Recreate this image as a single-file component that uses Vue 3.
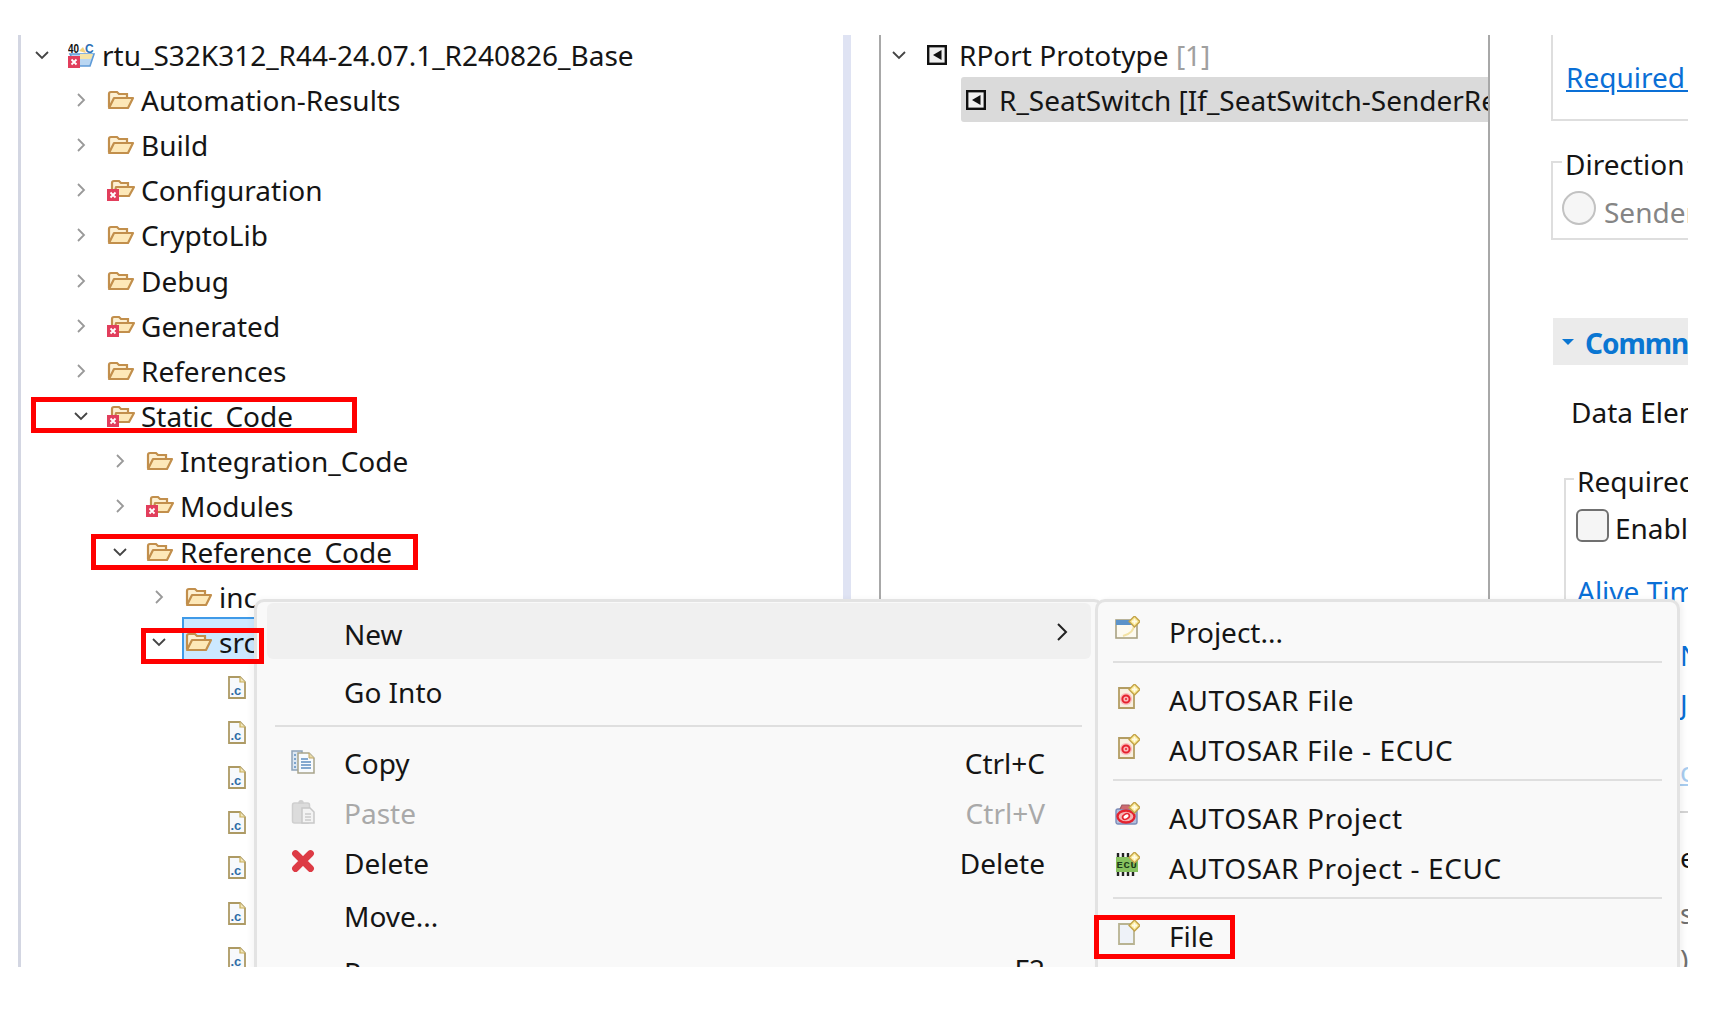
<script setup>
const rows = [
  { label: 'rtu_S32K312_R44-24.07.1_R240826_Base', level: 0, open: true, icon: 'root' },
  { label: 'Automation-Results', level: 1, icon: 'folder' },
  { label: 'Build', level: 1, icon: 'folder' },
  { label: 'Configuration', level: 1, icon: 'folderErr' },
  { label: 'CryptoLib', level: 1, icon: 'folder' },
  { label: 'Debug', level: 1, icon: 'folder' },
  { label: 'Generated', level: 1, icon: 'folderErr' },
  { label: 'References', level: 1, icon: 'folder' },
  { label: 'Static_Code', level: 1, open: true, icon: 'folderErr' },
  { label: 'Integration_Code', level: 2, icon: 'folder' },
  { label: 'Modules', level: 2, icon: 'folderErr' },
  { label: 'Reference_Code', level: 2, open: true, icon: 'folder' },
  { label: 'inc', level: 3, icon: 'folder' },
  { label: 'src', level: 3, open: true, icon: 'folder', selected: true },
  { label: 'a.c', level: 4, icon: 'cfile', leaf: true },
  { label: 'b.c', level: 4, icon: 'cfile', leaf: true },
  { label: 'c.c', level: 4, icon: 'cfile', leaf: true },
  { label: 'd.c', level: 4, icon: 'cfile', leaf: true },
  { label: 'e.c', level: 4, icon: 'cfile', leaf: true },
  { label: 'f.c', level: 4, icon: 'cfile', leaf: true },
  { label: 'g.c', level: 4, icon: 'cfile', leaf: true }
]
const indent = (level) => ({ paddingLeft: `${11 + level * 39}px` })

const mainItems = [
  { label: 'Go Into', cls: 'goInto' },
  { sep: true },
  { label: 'Copy', icon: 'copy', key: 'Ctrl+C' },
  { label: 'Paste', icon: 'paste', key: 'Ctrl+V', disabled: true },
  { label: 'Delete', icon: 'del', key: 'Delete' },
  { label: 'Move...', cls: 'tall' },
  { label: 'Rename...', key: 'F2', cls: 'tall' }
]
const subItems = [
  { label: 'Project...', icon: 'newproj' },
  { sep: true },
  { label: 'AUTOSAR File', icon: 'arfile', wide: true },
  { label: 'AUTOSAR File - ECUC', icon: 'arfile', wide: true },
  { sep: true },
  { label: 'AUTOSAR Project', icon: 'arproj', wide: true },
  { label: 'AUTOSAR Project - ECUC', icon: 'ecu', wide: true },
  { sep: true },
  { label: 'File', icon: 'newfile' }
]
const iconSize = {
  root: [28, 26], folder: [28, 20], folderErr: [28, 22], cfile: [18, 23],
  copy: [24, 25], paste: [24, 25], del: [24, 24],
  newproj: [25, 23], arfile: [25, 25], arproj: [25, 24], ecu: [25, 24], newfile: [25, 25]
}
</script>

<template>
  <div class="page">
    <svg class="defs" width="0" height="0" aria-hidden="true">
      <defs>
        <symbol id="spark" viewBox="0 0 10 10" overflow="visible">
          <path d="M5 0 L10 5 L5 10 L0 5 Z" fill="#f8e58a" stroke="#c2a24a" stroke-width="1.2"/>
          <path d="M5 2.6 V7.4 M2.6 5 H7.4" stroke="#fffbe6" stroke-width="1.6"/>
        </symbol>
        <symbol id="folder" viewBox="0 0 28 20">
          <path d="M2 17 V4 Q2 2 4 2 H10 L12 4 H20 V8" fill="#fdf0d2" stroke="#c28f4c" stroke-width="2.2"/>
          <path d="M2 18 L7 8 H26 L21 18 Z" fill="#fde8b8" stroke="#c28f4c" stroke-width="2.2" stroke-linejoin="round"/>
        </symbol>
        <symbol id="folderErr" viewBox="0 0 28 22">
          <path d="M5 15 V4 Q5 2 7 2 H12 L14 4 H21 V8" fill="#fdf0d2" stroke="#c28f4c" stroke-width="2.2"/>
          <path d="M7 17 L9 8 H27 L22 17 Z" fill="#fde8b8" stroke="#c28f4c" stroke-width="2.2" stroke-linejoin="round"/>
          <rect x="0" y="10" width="12" height="12" fill="#e23e5c"/>
          <path d="M3.5 13.5 L8.5 18.5 M8.5 13.5 L3.5 18.5" stroke="#fff" stroke-width="1.8"/>
        </symbol>
        <symbol id="root" viewBox="0 0 28 26">
          <text x="0" y="11" font-family="Liberation Sans Narrow, Liberation Sans, sans-serif" font-size="12" font-weight="700" fill="#111" textLength="11" lengthAdjust="spacingAndGlyphs">40</text>
          <text x="17" y="11" font-family="Liberation Sans, sans-serif" font-size="12" font-weight="700" fill="#2c6fb5">C</text>
          <path d="M11 9 L15 5 L18 11 Z" fill="#f2d27c"/>
          <path d="M2 12 H26 L22 24 H8 Z" fill="#b9d6f2" stroke="#5f9bd8" stroke-width="1.6"/>
          <path d="M12 12 H25 L23 17 H12 Z" fill="#f5e4a8"/>
          <rect x="0" y="14" width="12" height="12" fill="#e23e5c"/>
          <path d="M3.5 17.5 L8.5 22.5 M8.5 17.5 L3.5 22.5" stroke="#fff" stroke-width="1.8"/>
        </symbol>
        <symbol id="cfile" viewBox="0 0 18 23">
          <path d="M1 1 H12 L17 6 V22 H1 Z" fill="#f7f9fc" stroke="#ad9a64" stroke-width="1.8"/>
          <path d="M12 1 V6 H17" fill="#f1e6bb" stroke="#c9ae58" stroke-width="1.2"/>
          <text x="2.5" y="18.5" font-family="Liberation Sans, sans-serif" font-size="13" font-weight="700" fill="#2f6da6">.c</text>
        </symbol>
        <symbol id="port" viewBox="0 0 20 20">
          <rect x="1.2" y="1.2" width="17.6" height="17.6" fill="#f0f0f0" stroke="#111" stroke-width="2.4"/>
          <path d="M14.5 5 V15 L6 10 Z" fill="#111"/>
        </symbol>
        <symbol id="copy" viewBox="0 0 24 25">
          <path d="M1 2 H11 V21 H1 Z" fill="#dbe6f2" stroke="#8fa3b8" stroke-width="1.5"/>
          <path d="M7 4 H18 L23 9 V24 H7 Z" fill="#f8fbfe" stroke="#a8a48a" stroke-width="1.5"/>
          <path d="M18 4 V9 H23" fill="#e8d9a8" stroke="#c2a866" stroke-width="1"/>
          <path d="M10 10 H17 M10 13 H20 M10 16 H20 M10 19 H20 M3 6 H5 M3 10 H5 M3 14 H5 M3 18 H5" stroke="#5f8fc0" stroke-width="1.5"/>
        </symbol>
        <symbol id="paste" viewBox="0 0 24 25">
          <rect x="1.5" y="4" width="17" height="20" rx="2" fill="#dcdcdc" stroke="#cfcfcf" stroke-width="1.5"/>
          <path d="M7 5 Q7 1 10 1 Q13 1 13 5 Z" fill="#d0d0d0"/>
          <path d="M11 9 H19 L23 13 V24 H11 Z" fill="#f3f3f3" stroke="#c8c8c8" stroke-width="1.5"/>
          <path d="M14 15 H20 M14 18 H20 M14 21 H20" stroke="#cccccc" stroke-width="1.4"/>
        </symbol>
        <symbol id="del" viewBox="0 0 24 24">
          <path d="M4.5 4.5 L19.5 19.5 M19.5 4.5 L4.5 19.5" stroke="#dd3b45" stroke-width="6.8" stroke-linecap="round"/>
        </symbol>
        <symbol id="newproj" viewBox="0 0 25 23">
          <rect x="1" y="4" width="21" height="18" fill="#fdfaf0" stroke="#a9a283" stroke-width="1.6"/>
          <rect x="1" y="4" width="21" height="5" fill="#5c93c9"/>
          <path d="M19 9 Q19 17 8 20" fill="none" stroke="#f3e2a4" stroke-width="2"/>
          <use href="#spark" x="14" y="0" width="11" height="11"/>
        </symbol>
        <symbol id="arfile" viewBox="0 0 25 25">
          <path d="M4 4 H19 V24 H4 Z" fill="#f8efe0" stroke="#b39d63" stroke-width="1.8"/>
          <circle cx="11" cy="15" r="6" fill="#fbb9b9"/>
          <circle cx="11" cy="15" r="3.6" fill="none" stroke="#e5222e" stroke-width="2"/>
          <circle cx="11" cy="15" r="1" fill="#e5222e"/>
          <use href="#spark" x="14" y="0" width="11" height="11"/>
        </symbol>
        <symbol id="arproj" viewBox="0 0 25 24">
          <rect x="1" y="7" width="21" height="15" rx="2" fill="#b3bfdc" stroke="#7b8cb8" stroke-width="1.4"/>
          <path d="M5 7 L7 3 H14 L16 7" fill="#cf6a70" stroke="#9e5a62" stroke-width="1.2"/>
          <ellipse cx="11" cy="14.5" rx="8.5" ry="6" fill="#f6b3b3" stroke="#e5222e" stroke-width="2.4"/>
          <ellipse cx="11" cy="14.5" rx="3.6" ry="2.5" fill="#fff" stroke="#e5222e" stroke-width="1.6" transform="rotate(-30 11 14.5)"/>
          <use href="#spark" x="14" y="0" width="11" height="11"/>
        </symbol>
        <symbol id="ecu" viewBox="0 0 25 24">
          <rect x="1" y="5" width="22" height="15" fill="#86c25f"/>
          <path d="M3 1 V5 M8 1 V5 M13 1 V5 M3 20 V24 M8 20 V24 M13 20 V24 M18 20 V24" stroke="#222" stroke-width="2.4"/>
          <text x="1.5" y="16" font-family="Liberation Mono, monospace" font-size="9" font-weight="700" fill="#1d3a18" textLength="21" lengthAdjust="spacingAndGlyphs">ECU</text>
          <use href="#spark" x="14" y="0" width="11" height="11"/>
        </symbol>
        <symbol id="newfile" viewBox="0 0 25 25">
          <path d="M4 4 H19 V24 H4 Z" fill="#eef2f8" stroke="#b8b392" stroke-width="1.8"/>
          <use href="#spark" x="14" y="0" width="11" height="11"/>
        </symbol>
      </defs>
    </svg>

    <div class="shot">
      <section class="project">
        <ul class="tree">
          <li v-for="r in rows" :key="r.label" class="row" :class="{ selected: r.selected }" :style="indent(r.level)">
            <span class="twist">
              <svg v-if="!r.leaf && r.open" width="16" height="10" viewBox="0 0 16 10"><path d="M2 2 L8 8 L14 2" fill="none" stroke="#444" stroke-width="1.8"/></svg>
              <svg v-else-if="!r.leaf" width="10" height="16" viewBox="0 0 10 16"><path d="M2 2 L8 8 L2 14" fill="none" stroke="#999" stroke-width="1.8"/></svg>
            </span>
            <span class="glyph" :class="{ leaf: r.leaf }">
              <svg :width="iconSize[r.icon][0]" :height="iconSize[r.icon][1]"><use :href="'#' + r.icon"/></svg>
            </span>
            <span v-if="!r.leaf" class="name">{{ r.label }}</span>
          </li>
        </ul>
      </section>
      <div class="sash"></div>
      <section class="ports">
        <ul class="tree">
          <li class="row portRow">
            <span class="twist"><svg width="16" height="10" viewBox="0 0 16 10"><path d="M2 2 L8 8 L14 2" fill="none" stroke="#444" stroke-width="1.8"/></svg></span>
            <svg class="portIcon" width="20" height="20"><use href="#port"/></svg>
            <span class="name">RPort Prototype <span class="count">[1]</span></span>
          </li>
          <li class="row portItem">
            <svg class="portIcon" width="20" height="20"><use href="#port"/></svg>
            <span class="name">R_SeatSwitch [If_SeatSwitch-SenderReceiver]</span>
          </li>
        </ul>
      </section>
      <section class="form">
        <div class="linkBox"><a class="link">Required Sender/Receiver</a></div>
        <fieldset class="group direction">
          <legend>Direction</legend>
          <label class="radioLine"><span class="radio"></span><span class="muted">Sender / Receiver</span></label>
        </fieldset>
        <div class="sectionBar"><i class="tri"></i><b>Commn</b></div>
        <div class="dataEl">Data Element</div>
        <fieldset class="group required">
          <legend>Required</legend>
          <label class="checkLine"><span class="check"></span>Enable</label>
          <a class="alive">Alive Time</a>
        </fieldset>
        <div class="tail">
          <div class="frag fN">N</div>
          <div class="frag fJ">J</div>
          <div class="frag fC">c</div>
          <div class="fLine"></div>
          <div class="frag fE">e</div>
          <div class="frag fS">s</div>
          <div class="frag fP">)</div>
        </div>
      </section>

      <div class="menu main">
        <div class="item hover"><span class="label">New</span>
          <svg class="arrow" width="12" height="20" viewBox="0 0 12 20"><path d="M2 2 L10 10 L2 18" fill="none" stroke="#222" stroke-width="2"/></svg>
        </div>
        <template v-for="m in mainItems" :key="m.label || 'sep'">
          <div v-if="m.sep" class="sep"></div>
          <div v-else class="item" :class="[m.cls, { off: m.disabled }]">
            <svg v-if="m.icon" class="mIcon" :width="iconSize[m.icon][0]" :height="iconSize[m.icon][1]"><use :href="'#' + m.icon"/></svg>
            <span class="label">{{ m.label }}</span>
            <span v-if="m.key" class="key">{{ m.key }}</span>
          </div>
        </template>
      </div>

      <div class="menu sub">
        <template v-for="(s, i) in subItems" :key="i">
          <div v-if="s.sep" class="sep"></div>
          <div v-else class="item" :class="{ wide: s.wide }">
            <svg class="sIcon" :width="iconSize[s.icon][0]" :height="iconSize[s.icon][1]"><use :href="'#' + s.icon"/></svg>
            <span class="label">{{ s.label }}</span>
          </div>
        </template>
      </div>

      <div class="mark m1"></div>
      <div class="mark m2"></div>
      <div class="mark m3"></div>
      <div class="mark m4"></div>
    </div>
  </div>
</template>

<style scoped>
.page {
  width: 1726px;
  height: 1010px;
  box-sizing: border-box;
  padding: 35px 0 0 18px;
  background: #fff;
  overflow: hidden;
  font-family: "Noto Sans", "Open Sans", sans-serif;
  font-size: 28px;
  line-height: 38px;
  color: #151515;
}
.defs { position: absolute; }
.shot {
  position: relative;
  display: flex;
  width: 1670px;
  height: 932px;
  overflow: hidden;
}
.tree { list-style: none; margin: -3px 0 0; padding: 0; }
.row {
  position: relative;
  display: flex;
  align-items: center;
  height: 45.2px;
  white-space: nowrap;
}
.row > * { position: relative; }
.selected::before {
  content: "";
  position: absolute;
  left: 161px;
  top: -2px;
  width: 90px;
  height: 44px;
  box-sizing: border-box;
  background: #cce8ff;
  border-top: 2px solid #3f9ae8;
  border-left: 2px solid #3f9ae8;
}
.project {
  width: 825px;
  flex: none;
  box-sizing: border-box;
  border-left: 3px solid #d3d6e2;
}
.twist {
  width: 36px;
  flex: none;
  display: grid;
  grid-template-columns: 20px;
  justify-items: center;
  align-items: center;
}
.glyph { width: 34px; flex: none; display: flex; }
.glyph.leaf { margin-left: 4px; }
.sash { width: 8px; flex: none; background: #dfe3f3; }
.ports {
  width: 611px;
  flex: none;
  margin-left: 28px;
  box-sizing: border-box;
  border-left: 2px solid #a8a8a8;
  border-right: 2px solid #a8a8a8;
  overflow: hidden;
}
.portRow { padding-left: 8px; }
.portRow .portIcon { margin: 0 12px 0 0; }
.portRow .twist { width: 38px; }
.portItem {
  margin-left: 80px;
  padding-left: 5px;
  background: #dadada;
  border-radius: 3px 0 0 3px;
}
.portItem .portIcon { flex: none; margin-right: 13px; }
.count { color: #a0a0a0; }
.form {
  flex: 1;
  min-width: 0;
  margin-left: 61px;
  overflow: hidden;
  white-space: nowrap;
}
.linkBox {
  height: 86px;
  box-sizing: border-box;
  border-left: 2px solid #dedede;
  border-bottom: 2px solid #dedede;
  padding: 23px 0 0 13px;
}
.link { color: #0a6fd6; text-decoration: underline; }
.group {
  margin: 0;
  padding: 0;
  box-sizing: border-box;
  border: 2px solid #dedede;
  border-right: 0;
  min-width: 0;
}
.group legend { padding: 5px 3px 0; margin-left: 9px; line-height: 32px; }
.direction { margin-top: 22px; height: 97px; }
.radioLine, .checkLine { display: flex; align-items: flex-start; }
.radioLine { margin: 11px 0 0 9px; gap: 8px; }
.radio {
  width: 30px; height: 30px; flex: none;
  border: 2px solid #c2c2c2; border-radius: 50%; background: #f6f6f6;
}
.muted { color: #858585; padding-top: 2px; }
.sectionBar {
  display: flex;
  align-items: center;
  height: 47px;
  margin: 78px 0 0 2px;
  padding-left: 9px;
  background: #ebebeb;
  color: #0a76d2;
}
.sectionBar b { font-weight: 700; margin-left: 11px; padding-top: 3px; letter-spacing: -1px; }
.tri {
  width: 0; height: 0;
  border: 6px solid transparent;
  border-top: 6px solid #0a76d2;
  border-bottom: 0;
}
.dataEl { margin: 25px 0 0 20px; line-height: 44px; }
.required { margin: 26px 0 0 13px; border-bottom: 0; height: 170px; }
.required legend { margin-left: 8px; }
.checkLine { margin: 12px 0 0 10px; gap: 6px; }
.check {
  width: 29px; height: 29px; flex: none;
  border: 2px solid #707070; border-radius: 6px; background: #f5f5f5;
}
.alive { display: block; margin: 25px 0 0 11px; color: #0a6fd6; }
.tail { padding-left: 129px; }
.frag { line-height: 50px; }
.fN, .fJ { color: #0a6fd6; }
.fJ { margin-top: -1px; }
.fC { margin-top: 17px; color: #a8cdf0; text-decoration: underline; }
.fLine { height: 2px; margin-top: 15px; background: #d4d4d4; }
.fE { margin-top: 19px; }
.fS { margin-top: 6px; color: #707070; }
.fP { margin-top: -4px; color: #707070; }

.menu {
  position: absolute;
  top: 564px;
  box-sizing: border-box;
  background: #f9f9f9;
  border: 3px solid #e3e3e3;
  border-bottom: 0;
  border-radius: 10px 10px 0 0;
  height: 380px;
}
.main { left: 236px; width: 850px; padding: 1px 10px 0; box-shadow: -3px 0 6px rgba(0,0,0,.04); }
.sub { left: 1077px; width: 585px; padding: 5px 15px 0; box-shadow: 3px 0 5px rgba(0,0,0,.05); }
.item { display: flex; align-items: center; position: relative; white-space: nowrap; box-sizing: border-box; }
.main .item { height: 50px; padding-left: 77px; }
.main .hover { height: 56px; padding-top: 6px; background: #f0f0f0; border-radius: 6px; }
.main .goInto { height: 56px; margin-top: 5px; }
.main .tall { height: 56px; margin-top: 0; }
.arrow { position: absolute; right: 23px; top: 19px; }
.sep { height: 2px; background: #dfdfdf; }
.main .sep { margin: 5px 9px 11px 8px; }
.mIcon { position: absolute; left: 24px; top: 11px; }
.key { position: absolute; right: 46px; top: 6px; }
.off { color: #a9a9a9; }
.sub .item { height: 50px; padding-left: 56px; }
.sub .wide { letter-spacing: 0.6px; }
.sub .sep { margin: 4px 0 12px; }
.sIcon { position: absolute; left: 2px; top: 9px; }

.mark {
  position: absolute;
  box-sizing: border-box;
  border: 5px solid #f00;
}
.m1 { left: 13px; top: 362px; width: 326px; height: 36px; }
.m2 { left: 73px; top: 499px; width: 327px; height: 36px; }
.m3 { left: 123px; top: 593px; width: 123px; height: 36px; }
.m4 { left: 1076px; top: 880px; width: 141px; height: 44px; }
</style>
